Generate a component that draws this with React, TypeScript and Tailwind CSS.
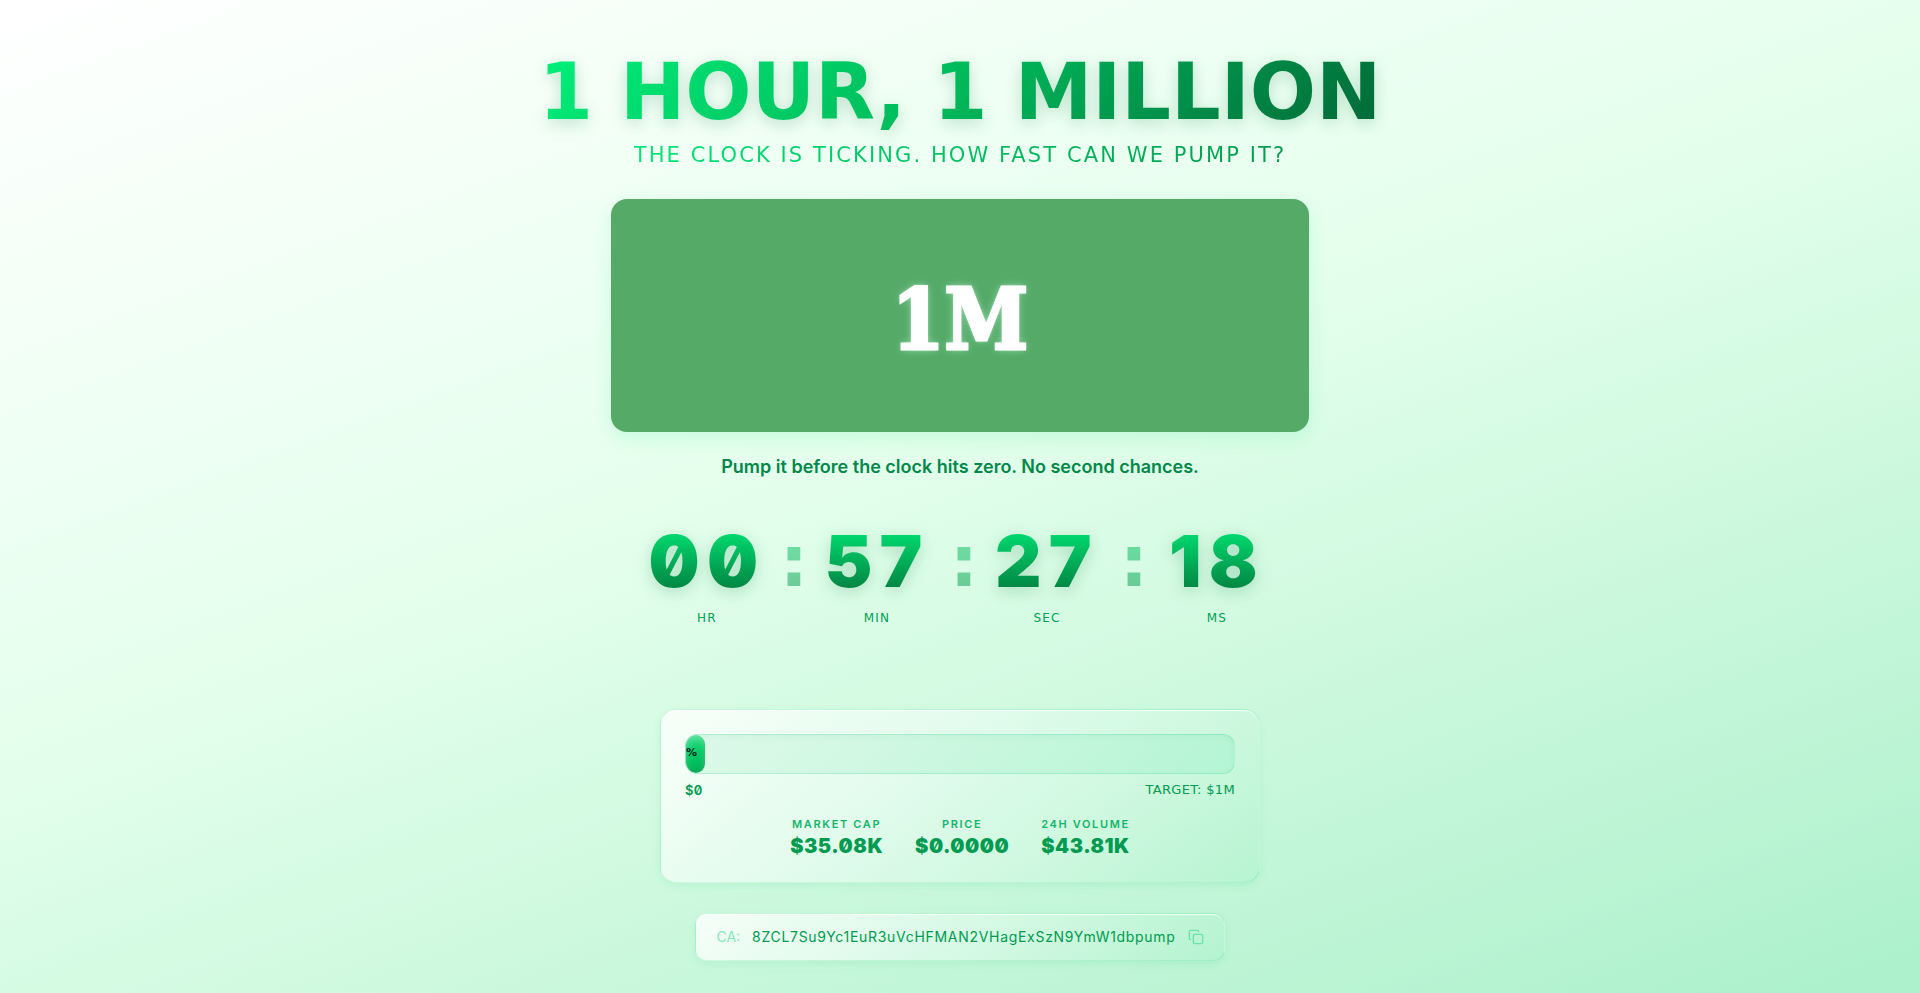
import { Copy } from "lucide-react";
import { Fragment } from "react";

const contractAddress = "8ZCL7Su9Yc1EuR3uVcHFMAN2VHagExSzN9YmW1dbpump";

const timeUnits = [
  { value: "00", label: "HR" },
  { value: "57", label: "MIN" },
  { value: "27", label: "SEC" },
  { value: "18", label: "MS" },
];

const stats = [
  { label: "Market Cap", value: "$35.08K" },
  { label: "Price", value: "$0.0000" },
  { label: "24h Volume", value: "$43.81K" },
];

const progress = 3.5;

const Hero = () => (
  <header className="flex flex-col items-center text-center font-['DejaVu_Sans',sans-serif]">
    <h1 className="bg-linear-135 from-[#00f07a] via-[#00b85a] to-[#006837] bg-clip-text text-[78px] leading-[88px] font-bold text-transparent uppercase drop-shadow-[0_4px_8px_rgba(0,120,60,0.22)]">
      1 Hour, 1 Million
    </h1>
    <p className="mt-1 bg-linear-135 from-[#00e676] to-[#009a4e] bg-clip-text text-[21px] leading-[30px] tracking-widest text-transparent uppercase">
      The clock is ticking. How fast can we pump it?
    </p>
  </header>
);

const Banner = () => (
  <div className="mt-[29px] flex aspect-3/1 w-full max-w-[698px] items-center justify-center rounded-2xl bg-[#55aa68] pt-2.5 shadow-[0_6px_20px_rgba(0,230,118,0.14)]">
    <span className="font-['DejaVu_Serif_Condensed','DejaVu_Serif',serif] text-[84px] leading-none font-bold text-white text-shadow-[0_0_3px_#ffffff,0_0_8px_rgba(200,255,225,0.7)] [-webkit-text-stroke:3px_#ffffff]">
      1M
    </span>
  </div>
);

const Countdown = () => (
  <div className="mt-[44px] flex justify-center pl-1 font-['DejaVu_Sans',sans-serif]">
    {timeUnits.map((unit, index) => (
      <Fragment key={unit.label}>
        {index > 0 && (
          <span className="w-[50px] bg-linear-to-b from-[#00d068] to-[#007a3c] bg-clip-text pl-1 text-center text-[72px] leading-[72px] font-bold text-transparent opacity-50">
            :
          </span>
        )}
        <div className="flex w-[120px] flex-col items-center">
          <span className="bg-linear-to-b from-[#00e676] to-[#007a3c] bg-clip-text font-['Inter',sans-serif] text-[72px] leading-[72px] font-black tracking-widest text-transparent slashed-zero drop-shadow-[0_4px_8px_rgba(0,120,60,0.22)]">
            {unit.value}
          </span>
          <span className="mt-[13px] text-xs leading-4 tracking-widest text-[#00a056]">
            {unit.label}
          </span>
        </div>
      </Fragment>
    ))}
  </div>
);

const ProgressCard = () => (
  <section className="mt-[83px] w-full max-w-[600px] rounded-2xl border border-[#00c864]/15 bg-linear-135 from-white/80 to-[#8aeebb]/20 p-6 shadow-[0_3px_8px_rgba(0,200,100,0.1),inset_0_1px_0_rgba(255,255,255,0.8)]">
    <div
      role="progressbar"
      aria-label="Progress to target"
      aria-valuenow={progress}
      className="h-10 overflow-hidden rounded-xl border border-[#00c878]/20 bg-linear-135 from-[#def9e9] to-[#b4f5d4] shadow-[inset_0_2px_6px_rgba(0,160,90,0.06)]"
    >
      <div
        className="flex h-full items-center rounded-xl bg-linear-160 from-[#2fe088] via-[#00c964] to-[#00b058] font-['DejaVu_Sans',sans-serif] text-[11px] font-bold text-[#05291a] shadow-[inset_0_3px_6px_rgba(255,255,255,0.3),inset_0_-2px_4px_rgba(0,90,45,0.2)]"
        style={{ width: `${progress}%` }}
      >
        %
      </div>
    </div>
    <div className="mt-2 flex justify-between text-[13px] leading-4 font-semibold tracking-wide text-[#009a50]">
      <span className="font-['Inter',sans-serif] slashed-zero">$0</span>
      <span className="font-['DejaVu_Sans',sans-serif] font-normal">TARGET: $1M</span>
    </div>
    <dl className="mt-[18px] flex justify-center gap-8 text-center font-['Inter',sans-serif]">
      {stats.map((stat) => (
        <div key={stat.label}>
          <dt className="text-[11px] leading-4 font-semibold tracking-[0.15em] text-[#14b46c] uppercase">
            {stat.label}
          </dt>
          <dd className="mt-0.5 text-xl leading-6 font-black tracking-wide text-[#009a50] slashed-zero">
            {stat.value}
          </dd>
        </div>
      ))}
    </dl>
  </section>
);

const ContractAddress = () => (
  <div className="mt-[30px] flex items-center rounded-xl border border-[#00c864]/15 bg-linear-135 from-white/80 to-[#8aeebb]/20 px-5 py-3 font-['Inter',sans-serif] text-sm leading-[22px] shadow-[0_3px_8px_rgba(0,200,100,0.1),inset_0_1px_0_rgba(255,255,255,0.8)]">
    <span className="text-[#86e8b7]">CA:</span>
    <span className="ml-3 tracking-wider text-[#009a50]">{contractAddress}</span>
    <button type="button" aria-label="Copy contract address" className="ml-3 text-[#6be3a8]">
      <Copy size={16} />
    </button>
  </div>
);

const App = () => {
  return (
    <main className="flex min-h-screen flex-col items-center bg-linear-160 from-white via-[#e4ffec] via-45% to-[#abf0cb] px-4 pt-12 pb-8">
      <Hero />
      <Banner />
      <p className="mt-[21px] font-['Inter',sans-serif] text-lg leading-7 font-semibold text-[#00874a]">
        Pump it before the clock hits zero. No second chances.
      </p>
      <Countdown />
      <ProgressCard />
      <ContractAddress />
    </main>
  );
};

export default App;
